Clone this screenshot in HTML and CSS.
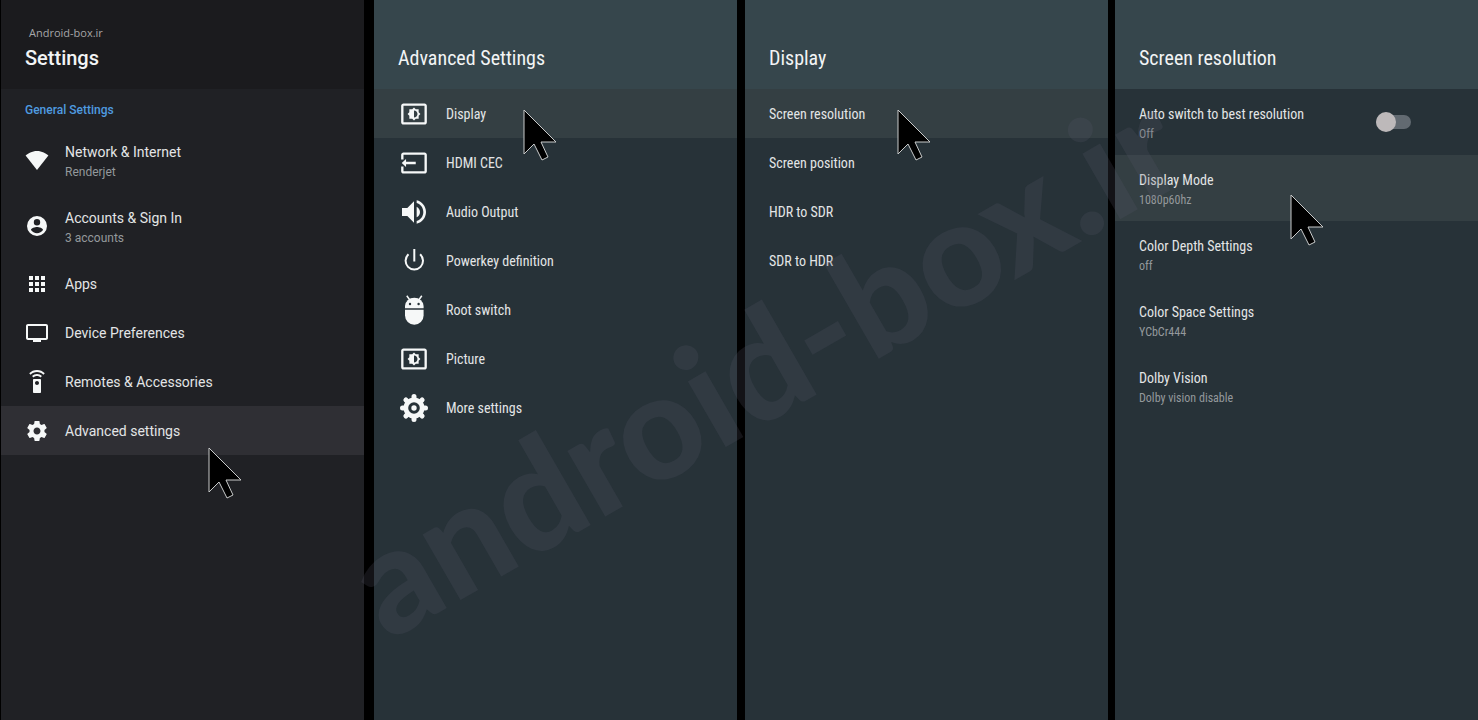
FILE: index.html
```html
<!DOCTYPE html>
<html lang="en">
<head>
<meta charset="utf-8">
<meta name="viewport" content="width=device-width, initial-scale=1">
<title>Settings</title>
<link rel="stylesheet" href="styles.css">
</head>
<body>
<svg class="defs" width="0" height="0" aria-hidden="true">
  <symbol id="cursor" viewBox="-1 -1 35 53"><path d="M0 0V44L10 34 18 50 24 47 17 32H32Z"/></symbol>
  <symbol id="brightness" viewBox="-1.7 -1.7 27.4 27.4"><path d="M21 3H3c-1.1 0-2 .9-2 2v14c0 1.1.9 2 2 2h18c1.1 0 2-.9 2-2V5c0-1.1-.9-2-2-2zm0 16.01H3V4.99h18v14.02zM8 16h2.5l1.5 1.5 1.5-1.5H16v-2.5l1.5-1.5-1.5-1.5V8h-2.5L12 6.5 10.5 8H8v2.5L6.5 12 8 13.5V16zm4-7c1.66 0 3 1.34 3 3s-1.34 3-3 3V9z"/></symbol>
</svg>
<main class="screens">
  <section class="panel panel-main">
    <header class="head">
      <p class="site">Android-box.ir</p>
      <h1 class="title">Settings</h1>
    </header>
    <h2 class="group">General Settings</h2>
    <button class="row tall" type="button">
      <svg class="icon" viewBox="0 0 24 24"><path d="M12 22 .6 7.400C3 5.600 7 3 12 3s9 2.600 11.400 4.400z"/></svg>
      <span class="text"><span class="name">Network &amp; Internet</span><span class="note">Renderjet</span></span>
    </button>
    <button class="row tall" type="button">
      <svg class="icon" viewBox="0 0 24 24"><path fill-rule="evenodd" d="M12 2a10 10 0 1 0 0 20 10 10 0 0 0 0-20zm0 3a3.2 3.2 0 1 1 0 6.400 3.200 3.200 0 0 1 0-6.400zm0 14.200c-2.500 0-4.710-1.280-6-3.220.03-1.990 4-3.080 6-3.080s5.970 1.090 6 3.080c-1.290 1.940-3.500 3.220-6 3.220z"/></svg>
      <span class="text"><span class="name">Accounts &amp; Sign In</span><span class="note">3 accounts</span></span>
    </button>
    <button class="row" type="button">
      <svg class="icon" viewBox="0 0 24 24"><path d="M4 8h4V4H4v4zm6 12h4v-4h-4v4zm-6 0h4v-4H4v4zm0-6h4v-4H4v4zm6 0h4v-4h-4v4zm6-10v4h4V4h-4zm-6 4h4V4h-4v4zm6 6h4v-4h-4v4zm0 6h4v-4h-4v4z"/></svg>
      <span class="name">Apps</span>
    </button>
    <button class="row" type="button">
      <svg class="icon" viewBox="0 0 24 24"><path d="M21 3H3c-1.100 0-2 .9-2 2v12c0 1.100.9 2 2 2h5v2h8v-2h5c1.100 0 2-.9 2-2V5c0-1.100-.9-2-2-2zm0 14H3V5h18v12z"/></svg>
      <span class="name">Device Preferences</span>
    </button>
    <button class="row" type="button">
      <svg class="icon" viewBox="0 0 24 24"><path d="M15 9H9c-.55 0-1 .45-1 1v12c0 .55.45 1 1 1h6c.55 0 1-.45 1-1V10c0-.55-.45-1-1-1zm-3 6c-1.100 0-2-.9-2-2s.9-2 2-2 2 .9 2 2-.9 2-2 2zM7.050 6.050l1.410 1.410C9.370 6.560 10.620 6 12 6s2.630.56 3.540 1.460l1.410-1.410C15.680 4.780 13.930 4 12 4s-3.680.78-4.950 2.050zM12 0C8.960 0 6.210 1.230 4.220 3.220l1.410 1.410C7.260 3.010 9.510 2 12 2s4.740 1.010 6.360 2.640l1.410-1.410C17.790 1.230 15.040 0 12 0z"/></svg>
      <span class="name">Remotes &amp; Accessories</span>
    </button>
    <button class="row selected" type="button">
      <svg class="icon" viewBox="0 0 24 24"><path d="M19.430 12.980c.04-.32.07-.64.07-.98s-.03-.66-.07-.98l2.110-1.650c.19-.15.24-.42.12-.64l-2-3.460c-.12-.22-.39-.3-.61-.22l-2.490 1c-.52-.4-1.080-.73-1.690-.98l-.38-2.650C14.460 2.180 14.250 2 14 2h-4c-.25 0-.46.18-.49.42l-.38 2.650c-.61.25-1.170.59-1.690.98l-2.490-1c-.23-.09-.49 0-.61.22l-2 3.460c-.13.22-.07.49.12.64l2.110 1.650c-.04.32-.07.65-.07.98s.03.66.07.98l-2.110 1.650c-.19.15-.24.42-.12.64l2 3.460c.12.22.39.3.61.22l2.490-1c.52.4 1.080.73 1.690.98l.38 2.650c.03.24.24.42.49.42h4c.25 0 .46-.18.49-.42l.38-2.650c.61-.25 1.170-.59 1.690-.98l2.490 1c.23.09.49 0 .61-.22l2-3.460c.12-.22.07-.49-.12-.64l-2.110-1.650zM12 15.500c-1.930 0-3.500-1.570-3.500-3.500s1.570-3.500 3.500-3.500 3.500 1.570 3.500 3.500-1.570 3.500-3.500 3.500z"/></svg>
      <span class="name">Advanced settings</span>
      <svg class="cursor cursor-main"><use href="#cursor"/></svg>
    </button>
  </section>

  <section class="panel panel-advanced">
    <header class="head"><h1 class="title">Advanced Settings</h1></header>
    <button class="row selected" type="button">
      <svg class="icon"><use href="#brightness"/></svg>
      <span class="name">Display</span>
      <svg class="cursor cursor-advanced"><use href="#cursor"/></svg>
    </button>
    <button class="row" type="button">
      <svg class="icon" viewBox="-1.7 -1.7 27.4 27.4"><path d="M21 3H3c-1.100 0-2 .9-2 2v4h2V5h18v14H3v-4H1v4c0 1.100.9 2 2 2h18c1.100 0 2-.9 2-2V5c0-1.100-.9-2-2-2zM1.500 12l3.700-3.500V11h8.300v2H5.200v2.500z"/></svg>
      <span class="name">HDMI CEC</span>
    </button>
    <button class="row" type="button">
      <svg class="icon" viewBox="0 0 24 24"><path d="M3 9v6h4l5 5V4L7 9H3zm13.500 3c0-1.770-1.020-3.290-2.500-4.030v8.050c1.480-.73 2.500-2.250 2.500-4.020zM14 3.230v2.060c2.890.86 5 3.540 5 6.710s-2.110 5.850-5 6.710v2.060c4.010-.91 7-4.490 7-8.770s-2.990-7.860-7-8.770z"/></svg>
      <span class="name">Audio Output</span>
    </button>
    <button class="row" type="button">
      <svg class="icon" viewBox="0 0 32 32"><path class="line" d="M16.300 4V16.500M10.500 9.300a8.700 8.700 0 1 0 11.600 0"/></svg>
      <span class="name">Powerkey definition</span>
    </button>
    <button class="row" type="button">
      <svg class="icon" viewBox="0 0 32 32"><path d="M7 14.300V12a9.300 8.300 0 0 1 18.600 0v2.300z"/><path d="M7 15.800h18.600v5.700a9.300 9.300 0 0 1-18.600 0z"/><path class="antenna" d="M8.800 1.800l3.200 4.500M23.800 1.800l-3.200 4.500"/><g class="hole"><circle cx="12" cy="10" r="1.200"/><circle cx="20.600" cy="10" r="1.200"/></g></svg>
      <span class="name">Root switch</span>
    </button>
    <button class="row" type="button">
      <svg class="icon"><use href="#brightness"/></svg>
      <span class="name">Picture</span>
    </button>
    <button class="row" type="button">
      <svg class="icon" viewBox="0 0 32 32"><circle cx="16" cy="16" r="10.500"/><path class="teeth" d="M16 4.500v23M4.500 16h23M7.900 7.900l16.200 16.200M24.100 7.900L7.900 24.100"/><circle class="hole" cx="16" cy="16" r="5.800"/><circle cx="16" cy="16" r="2.700"/></svg>
      <span class="name">More settings</span>
    </button>
  </section>

  <section class="panel panel-display">
    <header class="head"><h1 class="title">Display</h1></header>
    <button class="row selected" type="button">
      <span class="name">Screen resolution</span>
      <svg class="cursor cursor-display"><use href="#cursor"/></svg>
    </button>
    <button class="row" type="button"><span class="name">Screen position</span></button>
    <button class="row" type="button"><span class="name">HDR to SDR</span></button>
    <button class="row" type="button"><span class="name">SDR to HDR</span></button>
  </section>

  <section class="panel panel-resolution">
    <header class="head"><h1 class="title">Screen resolution</h1></header>
    <label class="row tall switch-row" for="auto-switch">
      <span class="text"><span class="name">Auto switch to best resolution</span><span class="note">Off</span></span>
      <input class="switch" type="checkbox" id="auto-switch">
    </label>
    <button class="row tall selected" type="button">
      <span class="text"><span class="name">Display Mode</span><span class="note">1080p60hz</span></span>
      <svg class="cursor cursor-resolution"><use href="#cursor"/></svg>
    </button>
    <button class="row tall" type="button">
      <span class="text"><span class="name">Color Depth Settings</span><span class="note">off</span></span>
    </button>
    <button class="row tall" type="button">
      <span class="text"><span class="name">Color Space Settings</span><span class="note">YCbCr444</span></span>
    </button>
    <button class="row tall" type="button">
      <span class="text"><span class="name">Dolby Vision</span><span class="note">Dolby vision disable</span></span>
    </button>
  </section>

  <svg class="watermark" viewBox="0 0 1478 720" aria-hidden="true"><text transform="translate(388 642) rotate(-30)">android-box.ir</text></svg>
</main>
</body>
</html>
```
FILE: styles.css
```css
* { box-sizing: border-box; }

body {
  margin: 0;
  background: #000;
  color: #e3e5e6;
  font-family: Roboto, "Open Sans", sans-serif;
}

h1, h2, p { margin: 0; }

.defs { position: absolute; }

.screens {
  position: relative;
  display: flex;
  min-height: 100vh;
  padding-left: 1px;
}

.panel {
  --body: #273238;
  --head: #36464c;
  --selected: #343f43;
  flex: 1 1 0;
  min-width: 0;
  background: var(--body);
  font-family: "Roboto Condensed", "Liberation Sans Narrow", Roboto, sans-serif;
}

.panel-main {
  --body: #202125;
  --head: #1b1b1e;
  --selected: #2f2f34;
  margin-right: 10px;
  font-family: Roboto, sans-serif;
}

.panel-advanced { margin-right: 8px; }
.panel-display { margin-right: 7px; }

.head {
  display: flex;
  flex-direction: column;
  justify-content: flex-end;
  gap: 5px;
  min-height: 89px;
  padding: 0 24px 19px;
  background: var(--head);
}

.site {
  padding-left: 4px;
  color: #a6a6a8;
  font: 11px/16px "Open Sans", sans-serif;
}

.title {
  color: #f2f4f5;
  font-size: 20px;
  font-weight: 400;
  line-height: 24px;
}

.panel-main .title { font-weight: 500; }

.group {
  padding: 11px 24px 7px;
  color: #4f9be0;
  font-size: 12px;
  font-weight: 500;
  line-height: 20px;
}

.row {
  position: relative;
  display: flex;
  align-items: center;
  gap: 16px;
  width: 100%;
  min-height: 49px;
  padding: 0 24px;
  border: 0;
  background: none;
  color: inherit;
  font: inherit;
  font-size: 14px;
  line-height: 20px;
  text-align: left;
}

.tall { min-height: 66px; }
.selected { background: var(--selected); }

.text {
  display: flex;
  flex-direction: column;
  padding-top: 4px;
}

.note {
  color: #94999c;
  font-size: 12px;
}

.icon {
  flex: none;
  width: 32px;
  height: 32px;
  fill: #f6f8f8;
}

.panel-main .icon {
  width: 24px;
  height: 24px;
}

.icon .line {
  fill: none;
  stroke: #f6f8f8;
  stroke-width: 2;
}

.icon .antenna {
  stroke: #f6f8f8;
  stroke-width: 1.5;
}

.icon .teeth {
  fill: none;
  stroke: #f6f8f8;
  stroke-width: 5;
  stroke-linecap: round;
}

.icon .hole { fill: var(--body); }

.switch-row {
  justify-content: space-between;
  padding-right: 67px;
}

.switch {
  appearance: none;
  position: relative;
  display: flex;
  align-items: center;
  width: 35px;
  height: 20px;
  margin: 0;
}

.switch::before {
  content: "";
  flex: 1;
  height: 14px;
  border-radius: 7px;
  background: #626a71;
}

.switch::after {
  content: "";
  position: absolute;
  left: 0;
  width: 20px;
  height: 20px;
  border-radius: 50%;
  background: #bdb9ba;
}

.switch:checked::after {
  left: auto;
  right: 0;
}

.cursor {
  position: absolute;
  z-index: 2;
  width: 35px;
  height: 53px;
  fill: #000;
  stroke: #c9cbcb;
  stroke-width: 1;
  pointer-events: none;
}

.cursor-main { left: 207px; top: 41px; }
.cursor-advanced { left: 149px; top: 20px; }
.cursor-display { left: 152px; top: 20px; }
.cursor-resolution { left: 175px; top: 39px; }

.watermark {
  position: absolute;
  inset: 0;
  width: 100%;
  pointer-events: none;
  fill: rgba(88, 88, 104, 0.22);
  font-family: Lato, sans-serif;
  font-size: 147px;
  font-weight: 900;
}
```
